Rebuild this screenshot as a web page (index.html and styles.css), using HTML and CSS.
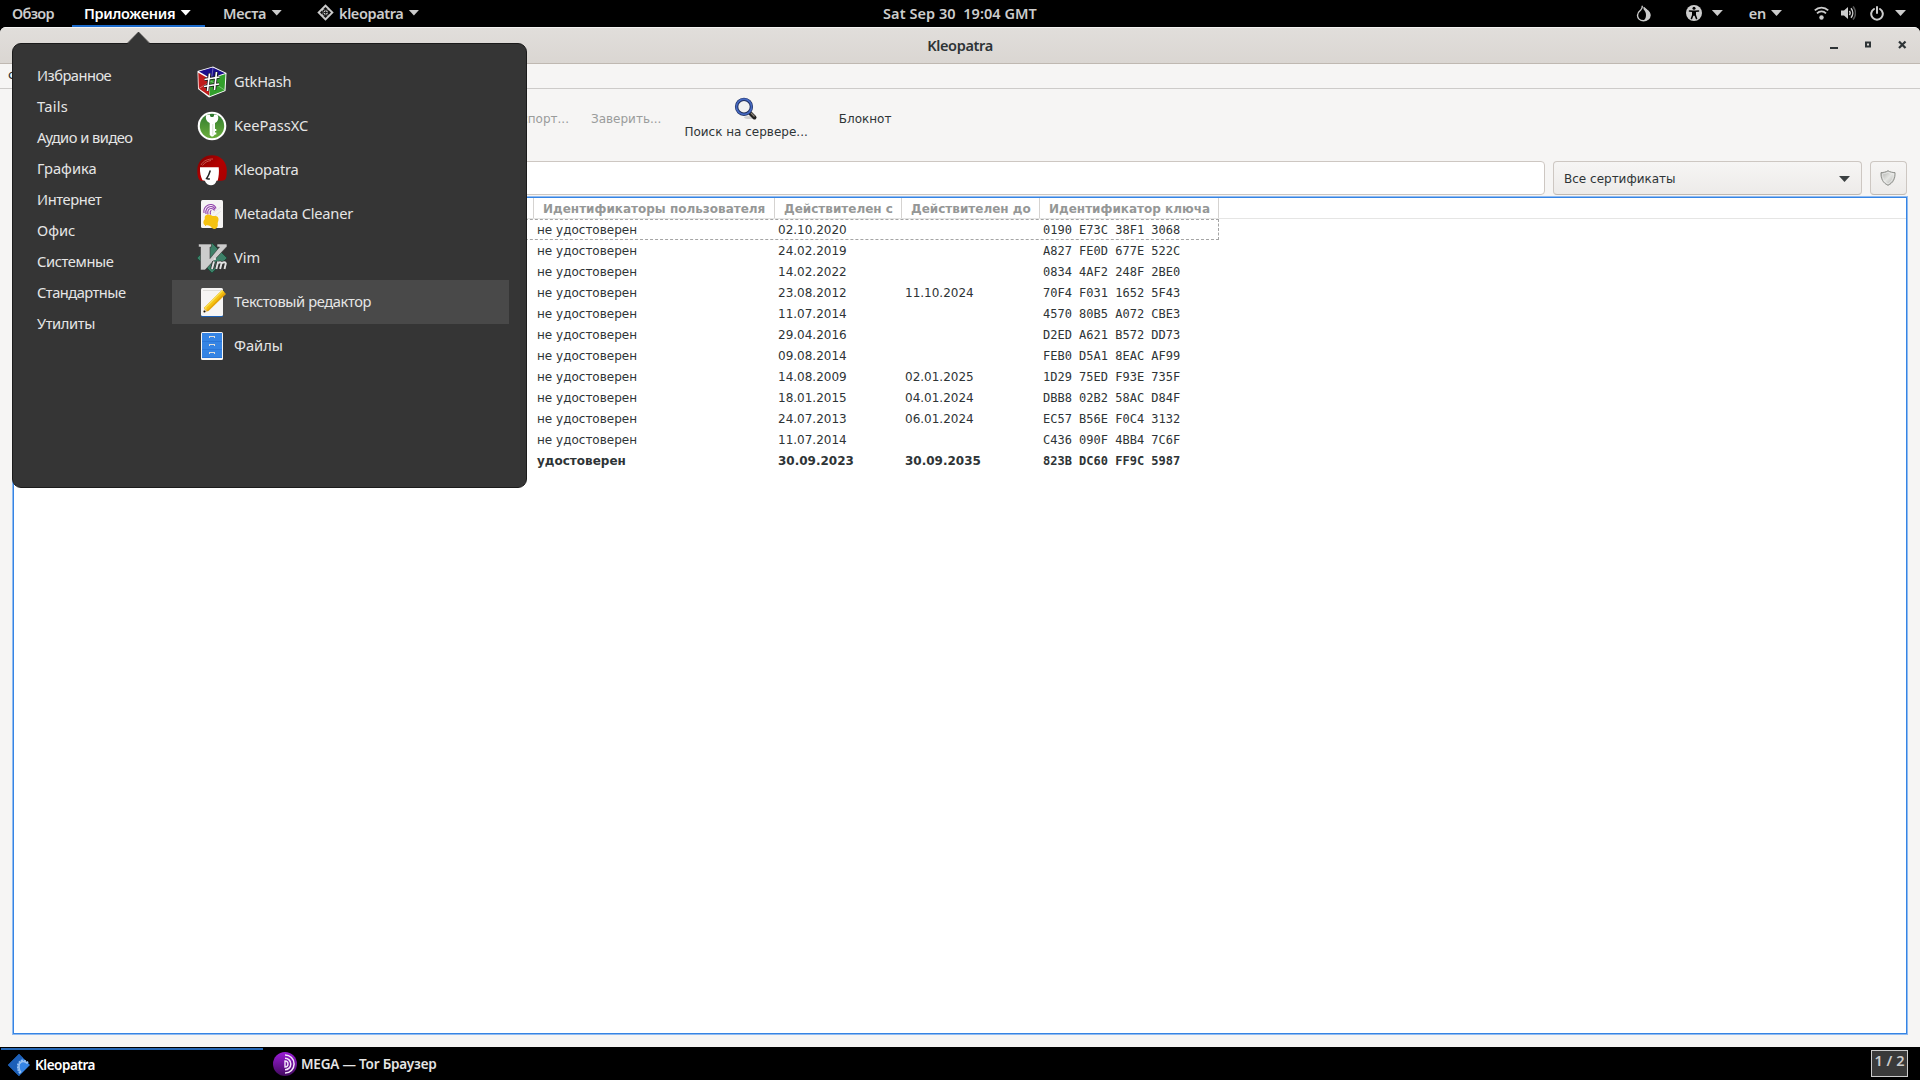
FILE: index.html
```html
<!DOCTYPE html>
<html lang="ru">
<head>
<meta charset="utf-8">
<title>Kleopatra</title>
<link rel="stylesheet" href="styles.css">
</head>
<body>
<svg width="0" height="0" class="defs">
  <defs>
    <linearGradient id="tor" x1="0" y1="0" x2="0" y2="1"><stop offset="0" stop-color="#9b1cd8"/><stop offset="1" stop-color="#420a5e"/></linearGradient>
    <linearGradient id="keepass" x1="0" y1="0" x2="0" y2="1"><stop offset="0" stop-color="#2f7a2f"/><stop offset="1" stop-color="#6cae3c"/></linearGradient>
    <linearGradient id="shield" x1="0" y1="0" x2="1" y2="1"><stop offset="0" stop-color="#a9aaa7"/><stop offset=".5" stop-color="#e4e5e2"/><stop offset="1" stop-color="#a9aaa7"/></linearGradient>
    <linearGradient id="hair" x1="0" y1="0" x2="1" y2="1"><stop offset="0" stop-color="#7c0000"/><stop offset=".5" stop-color="#b20000"/><stop offset="1" stop-color="#a80000"/></linearGradient>
  </defs>
</svg>
<header class="topbar">
  <div class="tb-left">
    <span class="tb-item t-overview">Обзор</span>
    <span class="tb-item t-apps active"><span class="w-apps">Приложения</span><i class="caret"></i></span>
    <span class="tb-item t-places"><span class="w-places">Места</span><i class="caret"></i></span>
    <span class="tb-item t-app"><svg width="17" height="17" viewBox="0 0 17 17"><path d="M8.500.3 16.700 8.500 8.500 16.700.3 8.500z" fill="#ccc"/><path d="M8.500 3 10.500 5h-4zM8.500 14l-2-2h4zM3 8.500l2-2v4zM14 8.500l-2-2v4z" fill="#111"/><circle cx="8.700" cy="8.500" r="2.900" fill="none" stroke="#111" stroke-width="1.300"/><path d="M8.700 6.500v4M6.700 8.500h4" stroke="#111" stroke-width=".9"/></svg><span class="w-kleo">kleopatra</span><i class="caret"></i></span>
  </div>
  <div class="clock">Sat Sep 30&nbsp; 19:04 GMT</div>
  <div class="tb-right">
    <svg class="i-onion" width="16" height="17" viewBox="0 0 16 17"><path d="M6.300.8c.2 2-.2 3-1.600 4.200C2.600 6.700 1.500 8.200 1.500 10.200c0 3.300 2.700 5.500 6 5.500s6.500-2.200 6.500-5.500c0-2.200-1.300-3.700-3.300-5.200L7.500 2.400" fill="none" stroke="#ccc" stroke-width="1.400"/><path d="M7 3.500c2 2.500 3 4 3 6.500 0 2.800-1 4.500-2.800 5.700 4 0 7-2.200 7-5.500 0-2.400-1.500-4-3.700-5.600z" fill="#ccc"/></svg>
    <svg class="i-acc" width="16" height="16" viewBox="0 0 16 16"><circle cx="8" cy="8" r="8" fill="#ccc"/><circle cx="8" cy="3.300" r="1.500" fill="#000"/><path d="M3.500 6 6.500 6.300 9.500 6.300 12.500 6M6.800 7h2.400v3l1.300 3.500M6.800 7v3l-1.300 3.500M8 7v3" fill="none" stroke="#000" stroke-width="1.600" stroke-linecap="round"/></svg>
    <i class="caret c-acc"></i>
    <span class="lang">en</span><i class="caret c-lang"></i>
    <svg class="i-wifi" width="15" height="14" viewBox="0 0 15 14"><g fill="none" stroke="#ccc" stroke-width="1.800"><path d="M.8 4.400a9.500 9.500 0 0 1 13.400 0"/><path d="M3 7.300a6.400 6.400 0 0 1 9 0"/></g><circle cx="7.500" cy="11.500" r="2.200" fill="#ccc"/></svg>
    <svg class="i-vol" width="15" height="14" viewBox="0 0 15 14"><path d="M0 4.500h3L7 1v12L3 9.500H0z" fill="#ccc"/><path d="M8.500 4.800a4 4 0 0 1 0 4.400" fill="none" stroke="#ccc" stroke-width="1.500"/><path d="M10 2.200a7.500 7.500 0 0 1 0 9.600" fill="none" stroke="#ccc" stroke-width="1.500"/><path d="M12 .4a10 10 0 0 1 0 13.200" fill="none" stroke="#555" stroke-width="1.500"/></svg>
    <svg class="i-power" width="14" height="15" viewBox="0 0 14 15"><path d="M4 3a5.800 5.800 0 1 0 6 0" fill="none" stroke="#ccc" stroke-width="2" stroke-linecap="round"/><path d="M7 1v6" stroke="#ccc" stroke-width="2" stroke-linecap="round"/></svg>
    <i class="caret c-sys"></i>
  </div>
</header>
<main class="window">
  <div class="titlebar">
    <span class="title">Kleopatra</span>
    <div class="winbtns">
      <svg width="78" height="10" viewBox="0 0 78 10"><path d="M0 7h8v2H0z" fill="#2e3436"/><path d="M36 2.500h4v4h-4z" fill="none" stroke="#2e3436" stroke-width="2"/><path d="m69 1.500 6.500 6.500m0-6.500-6.500 6.500" stroke="#2e3436" stroke-width="2.200"/></svg>
    </div>
  </div>
  <div class="menubar">Ф</div>
  <div class="toolbar">
    <span class="tool tool-export">Экспорт...</span>
    <span class="tool tool-sign">Заверить...</span>
    <span class="tool tool-search on"><svg width="24" height="24" viewBox="0 0 24 24"><ellipse cx="16" cy="20.500" rx="6" ry="1.600" fill="#000" opacity=".15"/><path d="m15.500 15.500 5 5" stroke="#222" stroke-width="4" stroke-linecap="round"/><path d="m17 16 3.500 3.500" stroke="#8b8378" stroke-width="1.200"/><circle cx="10" cy="9.800" r="7.400" fill="#f1f1f0" stroke="#20305f" stroke-width="3.400"/><circle cx="10" cy="9.800" r="7.600" fill="none" stroke="#4568c0" stroke-width="1.800"/></svg><span>Поиск на сервере...</span></span>
    <span class="tool tool-notes on">Блокнот</span>
  </div>
  <div class="filter">
    <div class="search"></div>
    <div class="combo"><span>Все сертификаты</span><i class="caret"></i></div>
    <div class="shieldbtn"><svg width="16" height="16" viewBox="0 0 16 16"><path d="M8 .7C6 2 3.500 2.600 1 2.600c-.4 6 2 10.500 7 12.700 5-2.200 7.400-6.700 7-12.700C12.500 2.600 10 2 8 .7z" fill="url(#shield)" stroke="#8d8f8b"/><path d="M8 2.300C6.400 3.300 4.500 3.800 2.500 3.900c0 4.600 1.800 8 5.500 9.900 3.700-1.900 5.500-5.300 5.500-9.900C11.500 3.800 9.600 3.300 8 2.300z" fill="none" stroke="#eee" stroke-width=".7"/></svg></div>
  </div>
  <div class="tree">
    <div class="row head"><span></span><span>Идентификаторы пользователя</span><span>Действителен с</span><span>Действителен до</span><span>Идентификатор ключа</span></div>
    <div class="row focus"><span></span><span>не удостоверен</span><span>02.10.2020</span><span></span><span class="key">0190 E73C 38F1 3068</span></div>
    <div class="row"><span></span><span>не удостоверен</span><span>24.02.2019</span><span></span><span class="key">A827 FE0D 677E 522C</span></div>
    <div class="row"><span></span><span>не удостоверен</span><span>14.02.2022</span><span></span><span class="key">0834 4AF2 248F 2BE0</span></div>
    <div class="row"><span></span><span>не удостоверен</span><span>23.08.2012</span><span>11.10.2024</span><span class="key">70F4 F031 1652 5F43</span></div>
    <div class="row"><span></span><span>не удостоверен</span><span>11.07.2014</span><span></span><span class="key">4570 80B5 A072 CBE3</span></div>
    <div class="row"><span></span><span>не удостоверен</span><span>29.04.2016</span><span></span><span class="key">D2ED A621 B572 DD73</span></div>
    <div class="row"><span></span><span>не удостоверен</span><span>09.08.2014</span><span></span><span class="key">FEB0 D5A1 8EAC AF99</span></div>
    <div class="row"><span></span><span>не удостоверен</span><span>14.08.2009</span><span>02.01.2025</span><span class="key">1D29 75ED F93E 735F</span></div>
    <div class="row"><span></span><span>не удостоверен</span><span>18.01.2015</span><span>04.01.2024</span><span class="key">DBB8 02B2 58AC D84F</span></div>
    <div class="row"><span></span><span>не удостоверен</span><span>24.07.2013</span><span>06.01.2024</span><span class="key">EC57 B56E F0C4 3132</span></div>
    <div class="row"><span></span><span>не удостоверен</span><span>11.07.2014</span><span></span><span class="key">C436 090F 4BB4 7C6F</span></div>
    <div class="row own"><span></span><span>удостоверен</span><span>30.09.2023</span><span>30.09.2035</span><span class="key">823B DC60 FF9C 5987</span></div>
  </div>
</main>
<footer class="taskbar">
  <div class="task task-kleo"><svg width="22" height="22" viewBox="0 0 22 22"><path d="M11 0 22 11 11 22 0 11z" fill="#3584e4"/><path d="M11 0 0 11l11 11 1-1.500C8 17 8 8 15 4z" fill="#1c5fb8"/><path d="M20 9c-5-5-11-1-10 4 0 3 1 4.500 2.500 6.500" fill="none" stroke="#99c1f1" stroke-width="2" stroke-dasharray="1.800 1"/><path d="M19.500 9.500c-5-4-9-1-8.500 3.500 0 2.500.7 4 2 5.500" fill="none" stroke="#99c1f1" stroke-width="1.500"/></svg><span>Kleopatra</span></div>
  <div class="task task-tor"><svg width="24" height="24" viewBox="0 0 24 24"><circle cx="12" cy="12" r="12" fill="url(#tor)"/><g fill="none" stroke="#f3e6fa" stroke-width="1.500"><path d="M12 2.900a9.100 9.100 0 0 1 0 18.200"/><path d="M12 6.200a5.800 5.800 0 0 1 0 11.600"/></g><path d="M12 9a3 3 0 0 1 0 6z" fill="none" stroke="#f3e6fa" stroke-width="1.400"/></svg><span>MEGA — Tor Браузер</span></div>
  <div class="pager">1 / 2</div>
</footer>
<div class="menu">
  <svg class="beak" width="26" height="14" viewBox="0 0 26 14"><path d="M0 14 12.500 1 25 14z" fill="#353535"/><path d="M.5 13 12.500 1 24.500 13" fill="none" stroke="#1b1b1b" stroke-opacity=".6"/></svg>
  <nav class="cats"><span class="tight">Избранное</span><span class="loose">Tails</span><span class="tight">Аудио и видео</span><span>Графика</span><span class="snug">Интернет</span><span>Офис</span><span class="snug">Системные</span><span class="tight">Стандартные</span><span class="snug">Утилиты</span></nav>
  <div class="apps">
    <div class="app"><svg width="32" height="32" viewBox="0 0 32 32"><path d="M1.500 5 17 .5 30.500 7 29.500 25 13 31.500 2 23z" fill="#fff"/><path d="M2.800 5.500 16.500 1.600 17.500 10.500z" fill="#221089"/><path d="M17.300 1.700 29 7.200 14 12 4 6z" fill="#1c0f8c"/><path d="M2.300 6.800 13.300 13v16.800L2.800 22.500z" fill="#c01c1c"/><path d="M29.500 8 13.600 13.200v17L28.500 24.500z" fill="#33a02c"/><path d="m17 2-1.500 11M3 22.500l12-7.500 13.500 9" stroke="#fff" stroke-width=".5" fill="none" opacity=".7"/><path d="M13.500 7.500 11.500 25M20.500 6 18.500 24M8.500 13.500l15-2.500M8 20.500 23 18" stroke="#111" stroke-width="3.200"/><path d="M13.500 7.500 11.500 25M20.500 6 18.500 24M8.500 13.500l15-2.500M8 20.500 23 18" stroke="#fff" stroke-width="1.700"/></svg><span class="slight">GtkHash</span></div>
    <div class="app"><svg width="32" height="32" viewBox="0 0 32 32"><circle cx="16" cy="16" r="14.300" fill="#fff"/><circle cx="16" cy="16" r="12.200" fill="url(#keepass)"/><path d="M10 5.500C12 4.200 20 4.200 22 5.500c.8 3.500 0 6-3 7.500v6h1.300v2H19v1.500h1.300v2H19L17 26.500h-1.500L13.700 25V13C10.500 11.500 9.300 9 10 5.500z" fill="#fff"/><path d="M14 4h4v1.500c0 1-1 1.600-2 1.600s-2-.6-2-1.600z" fill="#2f7a2f"/><path d="M16.800 14v11" stroke="#ccd9c8" stroke-width=".8"/></svg><span>KeePassXC</span></div>
    <div class="app"><svg width="32" height="32" viewBox="0 0 32 32"><path d="M16 1.200C24.500 1.200 30.800 7.500 30.800 16c0 4.500-.3 8-1.800 9.800-1.500 1-4 1.200-6.500 1H5C2 26 1.300 21 1.300 16 1.300 7.500 7.500 1.200 16 1.200z" fill="url(#hair)"/><path d="M4 13.300h18.700c.6 4.700 0 9.700-1 13.200l-1.200.3C19.700 29.800 17.500 31.300 15 31.300s-5-1.500-6.200-4.500l-2.300-.6C4.800 23 3.700 18.300 4 13.300z" fill="#fff"/><path d="M14.300 16.500c-.8 2.800-1.800 5.500-3.800 8.200 1.200.6 2 .5 3.300 0" fill="none" stroke="#222" stroke-width="1.500"/><path d="M5 11C7.500 6.500 12 5 17 5M6.500 11.500C9 8 12 7 15 6.500" stroke="#d8766c" stroke-width=".7" fill="none"/></svg><span class="slight">Kleopatra</span></div>
    <div class="app"><svg width="32" height="32" viewBox="0 0 32 32"><rect x="5" y="2" width="22" height="28" rx="1.500" fill="#f6f5f4"/><g fill="none" stroke="#9141ac" stroke-width="1.100"><path d="M8 15c-1-6 4-9 7.500-8.500 3 .5 4 2 4.500 4"/><path d="M10 16c-1-5 2-7.500 5-7.500 2 0 3.500 1 4 3"/><path d="M12 16.500c-1-4 1-6 3-6s3 1 3.500 2"/><path d="M14.500 16.500c-.5-2-.5-4 1-4"/></g><path d="m17 15 8-6m-6 9 6-5" stroke="#e6e4ea"/><path d="M9.500 17.500c1.500-1.500 4-1 5.500-.3s2 1 4 .8 4 1.500 3.500 4-1 2.500-.7 4.500-1.500 5-4 4.500-2.300-2.500-4.300-3.200-5.500.5-6-2.500 1.500-3.500 1.300-4.500-.3-2.300.7-3.300z" fill="#f5c211"/></svg><span class="slight">Metadata Cleaner</span></div>
    <div class="app"><svg width="32" height="32" viewBox="0 0 32 32"><path d="M16 1 31 16 16 31 1 16z" fill="#3d8068" stroke="#1d4b3a"/><path d="M2.500 2h13v3H14v11.500L23.500 5H21V2h10v2.500L9 28H4.500V5h-2z" fill="#ccc" stroke="#333" stroke-width=".6"/><g fill="none" stroke="#333" stroke-width="3.600"><path d="m18 19.500-2 7.500M20.300 27l1.900-7.500M21.500 21.500q3.500-2.500 4 0L24.100 27M25.300 21.500q4-2.500 4.500 0L28.500 27"/></g><g fill="none" stroke="#e2e2e2" stroke-width="1.900"><path d="m18 19.500-2 7.500M20.300 27l1.900-7.500M21.500 21.500q3.500-2.500 4 0L24.100 27M25.300 21.500q4-2.500 4.500 0L28.500 27"/></g><circle cx="18.800" cy="17" r="1.200" fill="#e2e2e2"/></svg><span>Vim</span></div>
    <div class="app hover"><svg width="32" height="32" viewBox="0 0 32 32"><rect x="5" y="4" width="22" height="27" rx="1.500" fill="#1a5fb4"/><rect x="5" y="2" width="22" height="28" rx="1.500" fill="#f6f5f4"/><path d="M7 4.500h18" stroke="#deddda"/><path d="m26 4 4 4-17.500 17-5 1.200 1-5z" fill="#e5a50a"/><path d="m26 4 2 2L10 24l-1.500-2.500z" fill="#f9e258"/><path d="m27 5 1.500 1.500L11.500 24l-1.500-2z" fill="#f5c211"/><path d="m8.300 22.500 2.800 2.700-3.700 1z" fill="#e8d9c0"/><circle cx="8.500" cy="25.500" r="1" fill="#111"/></svg><span class="snug">Текстовый редактор</span></div>
    <div class="app"><svg width="32" height="32" viewBox="0 0 32 32"><rect x="5" y="2" width="22" height="28" rx="1.500" fill="#f6f5f4"/><path d="M6 3h20v25H6z" fill="#3584e4"/><path d="M6 11.500h20M6 19.500h20M6 27.500h20" stroke="#2a76d8"/><path d="M13 6h6v2h-1V7h-4v1h-1zM13 14h6v2h-1v-1h-4v1h-1zM13 22h6v2h-1v-1h-4v1h-1z" fill="#deddda"/></svg><span>Файлы</span></div>
  </div>
</div>
</body>
</html>
```
FILE: styles.css
```css
* { box-sizing: border-box; }
body { margin: 0; width: 1920px; height: 1080px; overflow: hidden; display: flex; flex-direction: column; background: #000; font: 15px/20px "Noto Sans", sans-serif; }
.defs { position: absolute; }
svg { display: block; flex: none; }
.caret { flex: none; width: 11px; height: 6px; background: #ccc; clip-path: polygon(0 0, 100% 0, 50% 100%); }

.topbar { height: 27px; flex: none; display: grid; grid-template-columns: 1fr auto 1fr; align-items: center; background: #000; color: #ccc; font-weight: 600; font-size: 14.500px; }
.tb-left { display: flex; height: 27px; }
.tb-item { display: flex; align-items: center; height: 27px; gap: 5px; white-space: nowrap; padding-bottom: 2px; }
.t-overview { width: 72px; padding-left: 12px; letter-spacing: -.7px; }
.t-apps { width: 133px; padding-left: 12px; }
.w-apps { letter-spacing: -.3px; }
.t-places { width: 112px; padding-left: 18px; }
.w-places { letter-spacing: -.3px; }
.w-kleo { letter-spacing: -.4px; }
.active { color: #fff; border-bottom: 2px solid #1b6acb; padding-bottom: 0; }
.active .caret { background: #fff; }
.clock { white-space: pre; padding-bottom: 2px; letter-spacing: .05px; }
.tb-right { display: flex; align-items: center; justify-content: flex-end; height: 27px; padding: 0 14px 1px 0; }
.i-acc { margin-left: 34px; }
.c-acc { margin-left: 10px; }
.lang { margin: 0 0 1px 26px; letter-spacing: -.3px; }
.c-lang { margin-left: 5px; }
.i-wifi { margin-left: 32px; }
.i-vol { margin-left: 12px; }
.i-power { margin-left: 14px; }
.c-sys { margin-left: 11px; }

.window { height: 1020px; flex: none; display: flex; flex-direction: column; background: #f6f5f4; border-radius: 6px 6px 0 0; color: #2e3436; font: 12px/20px "DejaVu Sans", sans-serif; overflow: hidden; }
.titlebar { height: 37px; flex: none; display: grid; grid-template-columns: 1fr auto 1fr; align-items: center; background: linear-gradient(#e1dedb, #dad6d2); border-top: 1px solid #f5f4f3; border-bottom: 1px solid #bfb8b1; font: 600 14.500px/20px "Noto Sans", sans-serif; padding-bottom: 2px; }
.title { grid-column: 2; letter-spacing: -.35px; }
.winbtns { justify-self: end; margin-right: 12px; }
.menubar { height: 25px; flex: none; border-bottom: 1px solid #cdcbc9; padding: 2px 8px; }
.toolbar { height: 72px; flex: none; display: flex; align-items: center; padding: 0 0 12px 501px; color: #9a9c9b; }
.tool { white-space: nowrap; }
.tool-export { width: 68px; display: flex; justify-content: flex-end; }
.tool-sign { margin-left: 22px; }
.on { color: #2e3436; }
.tool-search { display: flex; flex-direction: column; align-items: center; line-height: 20px; margin: 4px 0 0 23px; }
.tool-search svg { margin: -4px 0 1px; }
.tool-notes { margin-left: 31px; }
.filter { height: 34px; flex: none; display: flex; padding: 0 13px 0 12px; }
.search { flex: 1; background: #fff; border: 1px solid #cdc7c2; border-radius: 4px; }
.combo { width: 309px; margin-left: 8px; border: 1px solid #cdc7c2; border-bottom-color: #bfb8b1; border-radius: 4px; background: linear-gradient(#f6f5f4, #edebe9); display: flex; align-items: center; justify-content: space-between; padding: 2px 11px 0 10px; }
.combo .caret { background: #3b4042; }
.shieldbtn { width: 37px; margin-left: 8px; border: 1px solid #cdc7c2; border-bottom-color: #bfb8b1; border-radius: 4px; background: linear-gradient(#f6f5f4, #edebe9); display: flex; align-items: center; justify-content: center; padding-right: 2px; }
.tree { width: 1896px; height: 839px; margin: 1px 0 0 12px; background: #fff; border: 1px solid #8fbaf0; box-shadow: inset 0 0 0 1px #3584e4; padding: 1px; }
.row { display: grid; grid-template-columns: 523px 241px 127px 138px 175px; height: 21px; line-height: 22px; width: 1205px; white-space: pre; }
.head { width: auto; color: #959796; font-weight: 700; border-bottom: 1px solid #e5e5e4; grid-template-columns: 520px 241px 127px 138px 179px; }
.head span { border-right: 1px solid #d5d3d1; padding-left: 9px; height: 20px; }
.focus { outline: 1px dashed #a5a5a5; outline-offset: -1px; }
.key { font-family: "DejaVu Sans Mono", monospace; }
.own { font-weight: 700; }

.taskbar { height: 33px; flex: none; display: flex; background: #000; color: #e5e5e5; font-weight: 600; font-size: 13.500px; }
.task { display: flex; align-items: center; width: 262px; gap: 5px; padding-left: 7px; white-space: nowrap; }
.task > span { padding-top: 1px; }
.task-kleo { margin: 1px 0 0 1px; border-top: 2px solid #2567b5; color: #fff; letter-spacing: -.45px; padding-bottom: 1px; }
.task-tor { margin-left: 2px; padding-left: 8px; gap: 4px; letter-spacing: -.2px; }
.pager { width: 37px; height: 27px; margin: 3px 12px 0 auto; border: 1px solid #ccc; background: #3a3a3a; color: #ccc; text-align: center; line-height: 19px; font-size: 14.500px; }

.menu { position: absolute; left: 12px; top: 43px; width: 515px; height: 445px; background: #353535; border: 1px solid #1b1b1b; border-radius: 9px; color: #e6e6e6; display: flex; font-size: 14.670px; }
.beak { position: absolute; left: 113px; top: -13px; }
.cats { width: 159px; flex: none; display: flex; flex-direction: column; padding: 16px 0 0 24px; }
.cats span { height: 31px; line-height: 31px; white-space: nowrap; }
.cats .tight { letter-spacing: -.52px; }
.snug { letter-spacing: -.38px; }
.slight { letter-spacing: -.22px; }
.cats .loose { letter-spacing: .25px; }
.apps { width: 337px; padding-top: 16px; }
.app { display: flex; align-items: center; height: 44px; padding-left: 24px; gap: 6px; white-space: nowrap; }
.app > span { padding-bottom: 2px; }
.hover { background: #494949; }
```
